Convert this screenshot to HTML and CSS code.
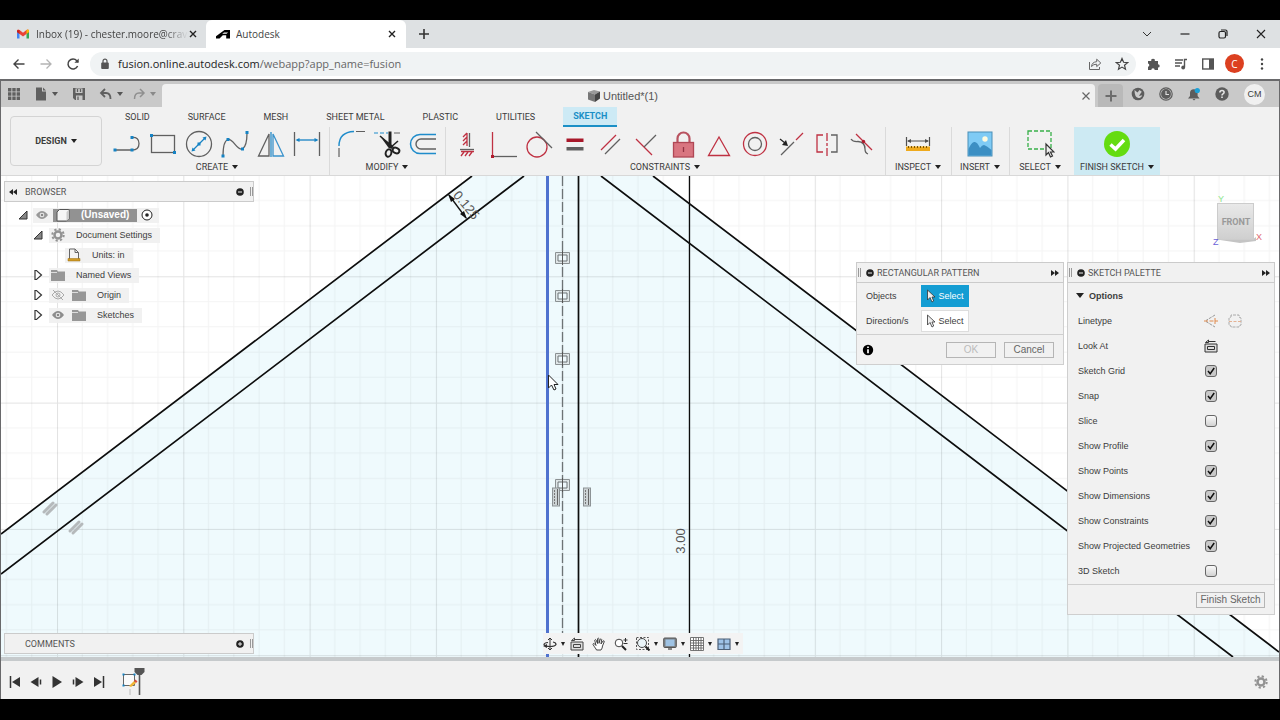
FILE: index.html
```html
<!DOCTYPE html>
<html lang="en">
<head>
<meta charset="utf-8">
<title>Autodesk</title>
<link rel="stylesheet" href="styles.css">
</head>
<body>
<header class="chrome">
  <div class="tabstrip">
    <div class="btab">
      <svg class="fav" width="14" height="12" viewBox="0 0 14 12"><path d="M1 2.500v8h2.500V5" fill="#4285f4"/><path d="M13 2.500v8h-2.500V5" fill="#34a853"/><path d="M1 2.200Q2 .8 3.500 2L7 4.800 10.500 2Q12 .8 13 2.200V4L7 8.500 1 4z" fill="#ea4335"/><path d="M10.500 2Q12 .8 13 2.200V4l-2.500 1.900z" fill="#fbbc04"/><path d="M1 2.500v1.600l2.500 1.800V2z" fill="#c5221f"/></svg>
      <span class="btitle fade">Inbox (19) - chester.moore@crav</span>
      <button class="bx" aria-label="Close tab"><svg width="10" height="10" viewBox="0 0 10 10"><path d="M2 2l6 6M8 2L2 8" stroke="#222" stroke-width="1.400"/></svg></button>
    </div>
    <div class="btab active">
      <svg class="fav" width="14" height="12" viewBox="0 0 14 12"><path d="M0 10.500V8.200L8.500 2H14v8.500h-3.800V7.200H6.800L3.500 10.500zM6.200 5.800h4.300l1.600-1.300H8z" fill="#000" fill-rule="evenodd"/></svg>
      <span class="btitle">Autodesk</span>
      <button class="bx" aria-label="Close tab"><svg width="10" height="10" viewBox="0 0 10 10"><path d="M2 2l6 6M8 2L2 8" stroke="#222" stroke-width="1.400"/></svg></button>
    </div>
    <button class="newtab" aria-label="New tab"><svg width="12" height="12" viewBox="0 0 12 12"><path d="M6 1v10M1 6h10" stroke="#333" stroke-width="1.600"/></svg></button>
    <div class="winctl">
      <button aria-label="Search tabs"><svg width="12" height="12" viewBox="0 0 12 12"><path d="M2 4l4 4 4-4" fill="none" stroke="#333"/></svg></button>
      <button aria-label="Minimize"><svg width="12" height="12" viewBox="0 0 12 12"><path d="M1.500 6h9" stroke="#222" stroke-width="1.200"/></svg></button>
      <button aria-label="Restore"><svg width="12" height="12" viewBox="0 0 12 12"><rect x="2" y="3.500" width="6.500" height="6.500" rx="1.500" fill="none" stroke="#222" stroke-width="1.200"/><path d="M4 2h4.500q1.500 0 1.500 1.500V8" fill="none" stroke="#222" stroke-width="1.200"/></svg></button>
      <button aria-label="Close"><svg width="12" height="12" viewBox="0 0 12 12"><path d="M2 2l8 8M10 2l-8 8" stroke="#222" stroke-width="1.100"/></svg></button>
    </div>
  </div>
  <div class="navbar">
    <button aria-label="Back"><svg width="14" height="14" viewBox="0 0 14 14"><path d="M12.500 7H2M6.500 2.500L2 7l4.500 4.500" fill="none" stroke="#444" stroke-width="1.400"/></svg></button>
    <button aria-label="Forward"><svg width="14" height="14" viewBox="0 0 14 14"><path d="M1.500 7H12M7.500 2.500L12 7l-4.500 4.500" fill="none" stroke="#b4b4b4" stroke-width="1.300"/></svg></button>
    <button aria-label="Reload"><svg width="14" height="14" viewBox="0 0 14 14"><path d="M11.600 9A5 5 0 1 1 10.800 3.700L12 5" fill="none" stroke="#444" stroke-width="1.500"/><path d="M12.700 1.500v4.300H8.400z" fill="#444"/></svg></button>
    <div class="omni">
      <svg width="10" height="12" viewBox="0 0 10 12"><rect x="1.200" y="4.500" width="7.600" height="6.500" rx="1" fill="#555"/><path d="M3 5V3.200a2 2 0 0 1 4 0V5" fill="none" stroke="#555" stroke-width="1.200"/></svg>
      <div class="url"><span>fusion.online.autodesk.com</span>/webapp?app_name=fusion</div>
      <button aria-label="Share"><svg width="14" height="14" viewBox="0 0 14 14"><path d="M1.500 5v7.500h10V10" fill="none" stroke="#666"/><path d="M3.500 9.500Q4 5 8.700 4.700V2.200L12.800 6 8.700 9.600V7.200Q5.500 7 3.500 9.500z" fill="none" stroke="#666"/></svg></button>
      <button aria-label="Bookmark"><svg width="14" height="14" viewBox="0 0 14 14"><path d="M7 1.500l1.600 3.800 4 .3-3.100 2.600 1 4L7 10.100 3.500 12.200l1-4L1.400 5.600l4-.3z" fill="none" stroke="#444" stroke-width="1.200"/></svg></button>
    </div>
    <div class="exts">
      <button aria-label="Extensions"><svg width="14" height="14" viewBox="0 0 14 14"><path d="M1 4h3.300a1.800 1.800 0 1 1 3.500 0H11v3.200a1.700 1.700 0 1 1 0 3.400V13H7.700a1.700 1.700 0 0 0-3.400 0H1V9.800a1.700 1.700 0 0 0 0-3.300z" fill="#555"/></svg></button>
      <button aria-label="Media"><svg width="14" height="14" viewBox="0 0 14 14"><path d="M1 3h8M1 6h7M1 9h5M10.500 10V2.500H13" fill="none" stroke="#555" stroke-width="1.400"/><circle cx="9.200" cy="10.500" r="1.900" fill="#555"/></svg></button>
      <button aria-label="Side panel"><svg width="14" height="14" viewBox="0 0 14 14"><rect x="1.700" y="2" width="10.600" height="10" fill="none" stroke="#555" stroke-width="1.400"/><path d="M8 2h4.500v10H8z" fill="#555"/></svg></button>
      <button class="avatar" aria-label="Profile">C</button>
      <button aria-label="Menu"><svg width="14" height="14" viewBox="0 0 14 14" fill="#444"><circle cx="7" cy="2.500" r="1.200"/><circle cx="7" cy="7" r="1.200"/><circle cx="7" cy="11.500" r="1.200"/></svg></button>
    </div>
  </div>
</header>

<div class="app">
  <div class="appbar">
    <div class="quick">
      <button aria-label="Apps"><svg width="14" height="14" viewBox="0 0 14 14" fill="#606060"><path d="M1 1h3.400v3.400H1zM5.300 1h3.400v3.400H5.300zM9.600 1H13v3.400H9.600zM1 5.300h3.400v3.400H1zM5.300 5.300h3.400v3.400H5.300zM9.600 5.300H13v3.400H9.600zM1 9.600h3.400V13H1zM5.300 9.600h3.400V13H5.300zM9.600 9.600H13V13H9.600z"/></svg></button>
      <button class="drop" aria-label="File"><svg width="14" height="14" viewBox="0 0 14 14"><path d="M2 .5h6v4h4V13.500H2z" fill="#606060"/><path d="M9 .5l3 3H9z" fill="#606060"/></svg><i class="car"></i></button>
      <button aria-label="Save"><svg width="14" height="14" viewBox="0 0 14 14"><path d="M1 1h12v12H3L1 11z" fill="#606060"/><path d="M3.500 1.500h7v4.500h-7zM4 8.500h6.500V13H4z" fill="#c9c9c9"/><path d="M5.500 2v3M8.500 2v3M6 9.500V13" stroke="#606060" stroke-width="1.300"/></svg></button>
      <button class="drop" aria-label="Undo"><svg width="14" height="14" viewBox="0 0 14 14"><path d="M6 2L2 6l4 4M2.500 6H7q4.500 0 4.500 6" fill="none" stroke="#606060" stroke-width="1.800"/></svg><i class="car"></i></button>
      <button class="drop dim" aria-label="Redo"><svg width="14" height="14" viewBox="0 0 14 14"><path d="M8 2l4 4-4 4M11.500 6H7q-4.500 0-4.500 6" fill="none" stroke="#606060" stroke-width="1.500"/></svg><i class="car"></i></button>
    </div>
    <div class="doctab">
      <svg width="14" height="14" viewBox="0 0 14 14"><path d="M1 3l6-2 6 1.500-5 3z" fill="#999"/><path d="M1 3l7 2.500V13L1 10.500z" fill="#777"/><path d="M8 5.500l5-3v7L8 13z" fill="#444"/></svg>
      <span>Untitled*(1)</span>
      <button class="docx" aria-label="Close document"><svg width="10" height="10" viewBox="0 0 10 10"><path d="M1.500 1.500l7 7M8.500 1.500l-7 7" stroke="#666" stroke-width="1.200"/></svg></button>
    </div>
    <button class="plus" aria-label="New design"><svg width="12" height="12" viewBox="0 0 12 12"><path d="M6 .5v11M.5 6h11" stroke="#6c6c6c" stroke-width="2"/></svg></button>
    <div class="tray">
      <button aria-label="Extensions"><svg width="14" height="14" viewBox="0 0 14 14"><circle cx="7" cy="7" r="6.300" fill="#5c5c5c"/><path d="M3.500 3L6.500 5.500 8.500 3l2.300 1.800L9 7.200 8 9l3.200-.8q-.8 2.800-3.800 2.800Q3.500 10.500 3.500 3z" fill="#ccc"/></svg></button>
      <button aria-label="Job status"><svg width="14" height="14" viewBox="0 0 14 14"><circle cx="7" cy="7" r="6.200" fill="none" stroke="#5c5c5c" stroke-width="1.200"/><circle cx="7" cy="7" r="4.900" fill="#5c5c5c"/><path d="M7 4v3.500h3" fill="none" stroke="#ddd" stroke-width="1.200"/></svg></button>
      <button aria-label="Notifications"><svg width="14" height="14" viewBox="0 0 14 14"><path d="M1 11.500L3 9V6a3.800 3.800 0 0 1 7.600 0v3l2 2.500zM5.500 12h3L7 13.500z" fill="#5c5c5c"/><circle cx="10.300" cy="3.500" r="2.600" fill="#1ba0d7"/></svg></button>
      <button aria-label="Help"><svg width="14" height="14" viewBox="0 0 14 14"><circle cx="7" cy="7" r="6.700" fill="#5c5c5c"/><path d="M4.900 5.500q0-2 2.100-2t2.100 1.800q0 1-1.100 1.600Q7 7.500 7 8.500M7 9.500v1.500" fill="none" stroke="#e4e4e4" stroke-width="1.600"/></svg></button>
      <button class="cm">CM</button>
    </div>
  </div>

  <div class="ribbon">
    <button class="design">DESIGN<i class="car"></i></button>
    <div class="rmain">
      <nav class="rtabs">
        <button>SOLID</button><button>SURFACE</button><button>MESH</button><button>SHEET METAL</button><button>PLASTIC</button><button>UTILITIES</button><button class="on">SKETCH</button>
      </nav>
      <div class="groups">
        <section class="group">
          <div class="tools">
            <button aria-label="Line"><svg width="30" height="30" viewBox="0 0 30 30"><path d="M3 21h17q7 0 7-6.500T20 8.500" fill="none" stroke="#606060" stroke-width="1.300"/><path d="M1.500 19.500h3v3h-3zM18.500 19.500h3v3h-3zM18.500 7h3v3h-3z" fill="#1683c4"/></svg></button>
            <button aria-label="Rectangle"><svg width="30" height="30" viewBox="0 0 30 30"><rect x="3.500" y="6.500" width="23" height="17" fill="none" stroke="#606060" stroke-width="1.300"/><path d="M2 5h3v3H2zM25 22h3v3h-3z" fill="#1683c4"/></svg></button>
            <button aria-label="Circle"><svg width="30" height="30" viewBox="0 0 30 30"><circle cx="15" cy="15" r="12.500" fill="none" stroke="#606060" stroke-width="1.300"/><path d="M9 21L21 9" stroke="#1683c4" stroke-width="1.200"/><path d="M7.500 22.500l1-4 3 3zM22.500 7.500l-1 4-3-3zM13.500 13.500h3v3h-3z" fill="#1683c4"/></svg></button>
            <button aria-label="Spline"><svg width="30" height="30" viewBox="0 0 30 30"><path d="M3 27Q3 12 8 10.500C13 9 17 22 22.500 20Q27 17 27 4" fill="none" stroke="#606060" stroke-width="1.300"/><path d="M1.500 25.500h3v3h-3zM6.500 9h3v3h-3zM21 18.500h3v3h-3zM25.500 2h3v3h-3z" fill="#1683c4"/></svg></button>
            <button aria-label="Mirror"><svg width="30" height="30" viewBox="0 0 30 30"><path d="M13 5v22H2.500z" fill="none" stroke="#606060" stroke-width="1.300"/><path d="M17 5v22h10.500z" fill="none" stroke="#3a93cc" stroke-width="1.300"/><path d="M15 3v25" stroke="#1683c4" stroke-width="1.200"/></svg></button>
            <button aria-label="Dimension"><svg width="30" height="30" viewBox="0 0 30 30"><path d="M2.500 3v24M27.500 3v24" stroke="#606060" stroke-width="1.300"/><path d="M5 11h20" stroke="#1683c4" stroke-width="1.300"/><path d="M3.500 11l4-2v4zM26.500 11l-4-2v4z" fill="#1683c4"/></svg></button>
          </div>
          <button class="glabel">CREATE<i class="car"></i></button>
        </section>
        <section class="group">
          <div class="tools">
            <button aria-label="Fillet"><svg width="30" height="30" viewBox="0 0 30 30"><path d="M3 17Q3 3 18 2.500" fill="none" stroke="#1f8ccb" stroke-width="1.400"/><path d="M3 19v9M20 2.500h9" stroke="#606060" stroke-width="1.200"/></svg></button>
            <button aria-label="Trim"><svg width="30" height="30" viewBox="0 0 30 30"><path d="M2 4h14" stroke="#1f8ccb" stroke-dasharray="4 2"/><path d="M22 4h6" stroke="#606060"/><path d="M18 2.500V19" stroke="#222" stroke-width="3"/><path d="M8 7l8 11 4 2 1-3z" fill="#222"/><path d="M26 12l-8 7M8 7l14 12" stroke="#222" stroke-width="1.600"/><ellipse cx="16.500" cy="24" rx="2.800" ry="3.800" transform="rotate(20 16.500 24)" fill="none" stroke="#222" stroke-width="1.900"/><ellipse cx="24" cy="21.500" rx="3.500" ry="2.700" transform="rotate(25 24 21.500)" fill="none" stroke="#222" stroke-width="1.900"/></svg></button>
            <button aria-label="Offset"><svg width="30" height="30" viewBox="0 0 30 30"><path d="M28 5.500H12a9.500 9.500 0 0 0 0 19H28" fill="none" stroke="#1f8ccb" stroke-width="1.500"/><path d="M28 10H13a5 5 0 0 0 0 10H28" fill="none" stroke="#606060" stroke-width="1.400"/></svg></button>
          </div>
          <button class="glabel">MODIFY<i class="car"></i></button>
        </section>
        <section class="group">
          <div class="tools red">
            <button aria-label="Horizontal/Vertical"><svg width="30" height="30" viewBox="0 0 30 30"><path d="M17.500 4v14" stroke="#606060" stroke-width="1.300"/><path d="M15 4v13M11 8l4-4M11 12l4-4M11 16l4-4M9 27l3-4M13 27l3-4M17 27l3-4M9 22.500h13"/><path d="M8 20.500h14" stroke="#606060" stroke-width="1.300"/></svg></button>
            <button aria-label="Coincident"><svg width="30" height="30" viewBox="0 0 30 30"><path d="M4.500 3v24"/><path d="M6 27.500h23" stroke="#606060" stroke-width="1.300"/><path d="M3 26h3v3H3z" fill="#b01c2e" stroke="none"/></svg></button>
            <button aria-label="Tangent"><svg width="30" height="30" viewBox="0 0 30 30"><circle cx="13" cy="18" r="10"/><path d="M12 3l16 16" stroke="#606060"/></svg></button>
            <button aria-label="Equal"><svg width="30" height="30" viewBox="0 0 30 30"><path d="M6.500 9.500h17V13h-17z" fill="#a8182a" stroke="none"/><path d="M6.500 18h17v3.500h-17z" fill="#606060" stroke="none"/></svg></button>
            <button aria-label="Parallel"><svg width="30" height="30" viewBox="0 0 30 30"><path d="M5 21L20 6"/><path d="M9 25l15-15" stroke="#606060"/></svg></button>
            <button aria-label="Perpendicular"><svg width="30" height="30" viewBox="0 0 30 30"><path d="M4 10l16 16"/><path d="M12 18L24 6" stroke="#606060"/></svg></button>
            <button aria-label="Fix"><svg width="30" height="30" viewBox="0 0 30 30"><path d="M9.500 14V9.500a6 6 0 0 1 12 0V14" fill="none" stroke="#b95360" stroke-width="2.200"/><rect x="5.500" y="13.500" width="20" height="14.500" fill="#d97580" stroke="#b04755"/><path d="M15.500 18v5" stroke="#923442"/></svg></button>
            <button aria-label="Midpoint"><svg width="30" height="30" viewBox="0 0 30 30"><path d="M15 8l10.500 18.500H4.500z"/></svg></button>
            <button aria-label="Concentric"><svg width="30" height="30" viewBox="0 0 30 30"><circle cx="15" cy="15" r="11.500"/><circle cx="15" cy="15" r="6.500" stroke="#606060"/></svg></button>
            <button aria-label="Collinear"><svg width="30" height="30" viewBox="0 0 30 30"><path d="M5 26l13-13" stroke="#606060"/><path d="M20 11l7-7"/><path d="M4 10l5 4" stroke="#222"/><path d="M12 17l-6-1 4-5z" fill="#222" stroke="none"/></svg></button>
            <button aria-label="Symmetry"><svg width="30" height="30" viewBox="0 0 30 30"><path d="M11 6H5v17h6"/><path d="M19 6h6v17h-6" stroke="#606060"/><path d="M15 4v23" stroke-dasharray="8 2 3 2"/></svg></button>
            <button aria-label="Curvature"><svg width="30" height="30" viewBox="0 0 30 30"><path d="M3 10Q5 13 10 12.500 17 13 17 20q0 4 3 5" stroke="#606060"/><path d="M8 5l16 16"/><circle cx="15.500" cy="12.500" r="1.700" fill="#b01c2e" stroke="none"/></svg></button>
          </div>
          <button class="glabel">CONSTRAINTS<i class="car"></i></button>
        </section>
        <section class="group one">
          <div class="tools"><button aria-label="Measure"><svg width="30" height="30" viewBox="0 0 30 30"><path d="M3.500 8v9M26.500 8v9M5 12h20" stroke="#505050" stroke-width="1.200"/><path d="M4 12l4-2v4zM26 12l-4-2v4z" fill="#505050"/><path d="M3 17.500h24V22H3z" fill="#efaa1d"/><path d="M5.500 17v2M8.500 17v2M11.500 17v2M14.500 17v2M17.500 17v2M20.500 17v2M23.500 17v2" stroke="#7c5500"/></svg></button></div>
          <button class="glabel">INSPECT<i class="car"></i></button>
        </section>
        <section class="group one ins">
          <div class="tools"><button aria-label="Insert image"><svg width="30" height="30" viewBox="0 0 30 30"><rect x="3" y="3" width="24" height="24" fill="#7fcbf5" stroke="#4a8fb8"/><path d="M3.500 20Q6 14 9 13t6 6q2-3 4-3 3 1 7.500 5v5.500h-23z" fill="#3c8fc3"/><circle cx="20" cy="10" r="2.700" fill="#fffbe0"/></svg></button></div>
          <button class="glabel">INSERT<i class="car"></i></button>
        </section>
        <section class="group one sel">
          <div class="tools"><button aria-label="Select"><svg width="30" height="30" viewBox="0 0 30 30"><rect x="3" y="2" width="23" height="18" fill="none" stroke="#38b049" stroke-width="1.300" stroke-dasharray="4 2"/><path d="M21 15v11l2.500-2.500 2 4.500 2-1-2-4h3.500z" fill="#eee" stroke="#333" stroke-width="1.200"/></svg></button></div>
          <button class="glabel">SELECT<i class="car"></i></button>
        </section>
        <section class="group one fin">
          <div class="tools"><button aria-label="Finish sketch"><svg width="30" height="30" viewBox="0 0 30 30"><circle cx="15" cy="15" r="13" fill="#64dc10"/><path d="M8.500 15.500l5 4.500 8.500-9" fill="none" stroke="#fff" stroke-width="3.500"/></svg></button></div>
          <button class="glabel">FINISH SKETCH<i class="car"></i></button>
        </section>
      </div>
    </div>
  </div>

  <main class="work">
    <svg class="sketch" viewBox="1 176 1278 481" preserveAspectRatio="xMidYMid slice">
      <defs>
        <pattern id="grid" x="57" y="150" width="126.300" height="126.300" patternUnits="userSpaceOnUse">
          <path d="M25.260 0V126.300M50.520 0V126.300M75.780 0V126.300M101.040 0V126.300M0 25.260H126.300M0 50.520H126.300M0 75.780H126.300M0 101.040H126.300" stroke="#000" stroke-opacity=".045"/>
          <path d="M.5 0V126.300M0 .5H126.300" stroke="#000" stroke-opacity=".11"/>
        </pattern>
        <linearGradient id="cube" x1="0" y1="0" x2="0" y2="1"><stop offset="0" stop-color="#e9e9e9"/><stop offset="1" stop-color="#cfcfcf"/></linearGradient>
        <g id="sym" fill="none" stroke="#8b9193"><path d="M-7-5.500H7v11H-7z" fill="#dfe6e8"/><path d="M0-3h-4.500v6H0M0-3h4.500v6H0" fill="#eef8fc" stroke="#6f7577"/><path d="M0-7V7" stroke="#555"/></g>
        <g id="vert"><rect x="-4" y="-9" width="7" height="18" fill="#ccd3d5" stroke="#8d9396"/><path d="M1-8V8" stroke="#666"/><path d="M-2-7V8" stroke="#777" stroke-dasharray="2 1"/></g>
        <g id="par" stroke="#b5b9bb" stroke-width="3" stroke-linecap="round"><path d="M-6 4L3-5M-3 6L6-3"/></g>
      </defs>
      <path d="M1 176h1278v481H1z" fill="#fff"/>
      <path d="M1 534L472 176H653L1279 652v5H1z" fill="#effafd"/>
      <path d="M1 176h1278v481H1z" fill="url(#grid)"/>
      <g fill="none" stroke="#0d0d0d" stroke-width="1.700">
        <path d="M1 534L472 176M1 574L524 176M601 176L1233 657M653 176L1279 652"/>
        <path d="M578.500 176V657"/>
        <path d="M689.500 176V657" stroke-width="1.300"/>
      </g>
      <path d="M547.500 176V657" stroke="#4f72cf" stroke-width="3"/>
      <path d="M562.500 176V657" stroke="#6d7375" stroke-width="1.300" stroke-dasharray="10 3"/>
      <use href="#sym" x="562.500" y="258"/><use href="#sym" x="562.500" y="296"/><use href="#sym" x="562.500" y="359"/><use href="#sym" x="562.500" y="485"/>
      <use href="#vert" x="556.500" y="497"/><use href="#vert" x="587.500" y="497"/>
      <use href="#par" x="50" y="508"/><use href="#par" x="76" y="527"/>
      <path d="M449 195l17 23" stroke="#111" stroke-width="1.300"/><path d="M448 194l7 5-4 3zM467 219l-7-5 4-3z" fill="#111"/>
      <text class="dim-text" text-anchor="middle" transform="translate(463 208) rotate(50)">0.125</text>
      <text class="dim-text" text-anchor="middle" transform="translate(685 541) rotate(-90)">3.00</text>
      <path d="M548.500 375v13l3-3 2.500 5 2-1-2-4.500h4z" fill="#fff" stroke="#222"/>
      <path d="M1220 240h32l4-3v4l-16 2z" fill="#c4c4c4"/>
      <rect x="1217.500" y="203.500" width="36" height="36" fill="url(#cube)" stroke="#ccc"/>
      <text class="cube-text" x="1236" y="225" text-anchor="middle">FRONT</text>
      <text class="axis" x="1218" y="202" fill="#8de68d">Y</text><text class="axis" x="1213" y="245" fill="#6a5fd8">Z</text><text class="axis" x="1256" y="240" fill="#e06a72">X</text>
    </svg>

    <aside class="left">
      <div class="phead"><button class="ico" aria-label="Collapse"><svg width="10" height="8" viewBox="0 0 10 8"><path d="M5 1v6L1 4zM9 1v6L5 4z" fill="#222"/></svg></button><span>BROWSER</span><button class="ico end" aria-label="Minimize"><svg width="8" height="8" viewBox="0 0 8 8"><circle cx="4" cy="4" r="3.800" fill="#222"/><path d="M2 4h4" stroke="#eee"/></svg></button><i class="grip"></i></div>
      <ul class="tree">
        <li class="l0"><svg class="tri" width="10" height="10" viewBox="0 0 10 10"><path d="M9 1v8H1z" fill="#888" stroke="#333"/></svg><div class="node"><svg class="eye" width="14" height="10" viewBox="0 0 14 10"><path d="M1 5q6-8 12 0-6 8-12 0z" fill="#999"/><circle cx="7" cy="5" r="2.300" fill="#eee"/><circle cx="7" cy="5" r="1.300" fill="#888"/></svg><span class="root"><svg width="14" height="14" viewBox="0 0 14 14"><path d="M1 4l2.500-2.500H13v9L10.500 13H1z" fill="#f6f6f6" stroke="#555"/><path d="M10.500 13V4L13 1.500v9z" fill="#ccc"/></svg><b>(Unsaved)</b></span><svg width="12" height="12" viewBox="0 0 12 12"><circle cx="6" cy="6" r="5" fill="#fff" stroke="#222"/><circle cx="6" cy="6" r="1.800" fill="#222"/></svg></div></li>
        <li class="l1"><svg class="tri" width="10" height="10" viewBox="0 0 10 10"><path d="M9 1v8H1z" fill="#888" stroke="#333"/></svg><div class="node"><svg width="14" height="14" viewBox="0 0 14 14"><circle cx="7" cy="7" r="3.500" fill="none" stroke="#929292" stroke-width="2.500"/><circle cx="7" cy="7" r="5.700" fill="none" stroke="#929292" stroke-width="2" stroke-dasharray="2.200 2.276"/></svg><span>Document Settings</span></div></li>
        <li class="l2"><div class="node"><svg width="14" height="14" viewBox="0 0 14 14"><path d="M2.500 11V1H8l3.500 3.500V11M8 1v3.500h3.500" fill="#f4f4f4" stroke="#666"/><path d="M1 10.500h12V13H1z" fill="#d19a25" stroke="#9a6e13" stroke-width=".5"/></svg><span>Units: in</span></div></li>
        <li class="l1"><svg class="tri" width="10" height="12" viewBox="0 0 10 12"><path d="M2 1.500h1.500L8.500 6l-5 4.500H2z" fill="#fff" stroke="#333" stroke-width="1.200"/></svg><div class="node"><svg width="14" height="12" viewBox="0 0 14 12"><path d="M0 1h6l1 1.500h7V12H0z" fill="#979797"/><path d="M0 3.500h6" stroke="#ddd"/></svg><span>Named Views</span></div></li>
        <li class="l1"><svg class="tri" width="10" height="12" viewBox="0 0 10 12"><path d="M2 1.500h1.500L8.500 6l-5 4.500H2z" fill="#fff" stroke="#333" stroke-width="1.200"/></svg><div class="node"><svg width="14" height="10" viewBox="0 0 14 10"><path d="M1 5q6-8 12 0-6 8-12 0z" fill="none" stroke="#aaa"/><circle cx="7" cy="5" r="2" fill="none" stroke="#aaa"/><path d="M2 0l10 10" stroke="#aaa"/></svg><svg width="14" height="12" viewBox="0 0 14 12"><path d="M0 1h6l1 1.500h7V12H0z" fill="#979797"/><path d="M0 3.500h6" stroke="#ddd"/></svg><span>Origin</span></div></li>
        <li class="l1"><svg class="tri" width="10" height="12" viewBox="0 0 10 12"><path d="M2 1.500h1.500L8.500 6l-5 4.500H2z" fill="#fff" stroke="#333" stroke-width="1.200"/></svg><div class="node"><svg width="14" height="10" viewBox="0 0 14 10"><path d="M1 5q6-8 12 0-6 8-12 0z" fill="#8d8d8d"/><circle cx="7" cy="5" r="2.300" fill="#eee"/><circle cx="7" cy="5" r="1.300" fill="#888"/></svg><svg width="14" height="12" viewBox="0 0 14 12"><path d="M0 1h6l1 1.500h7V12H0z" fill="#979797"/><path d="M0 3.500h6" stroke="#ddd"/></svg><span>Sketches</span></div></li>
      </ul>
      <div class="phead comments"><span>COMMENTS</span><button class="ico end" aria-label="Expand"><svg width="8" height="8" viewBox="0 0 8 8"><circle cx="4" cy="4" r="3.800" fill="#222"/><path d="M2 4h4M4 2v4" stroke="#eee"/></svg></button><i class="grip"></i></div>
    </aside>

    <div class="right">
      <form class="panel">
        <div class="phead"><i class="grip"></i><button type="button" class="ico" aria-label="Minimize"><svg width="8" height="8" viewBox="0 0 8 8"><circle cx="4" cy="4" r="3.800" fill="#222"/><path d="M2 4h4" stroke="#eee"/></svg></button><span>RECTANGULAR PATTERN</span><button type="button" class="ico end" aria-label="Expand"><svg width="10" height="8" viewBox="0 0 10 8"><path d="M1 1v6l4-3zM5 1v6l4-3z" fill="#222"/></svg></button></div>
        <div class="pick"><label for="obj">Objects</label><button type="button" id="obj" class="blue"><svg width="10" height="14" viewBox="0 0 10 14"><path d="M1.500 1v10l2.500-2.500L6 13l1.700-1L6 8h3z" fill="#eee" stroke="#333" stroke-width=".8"/></svg>Select</button></div>
        <div class="pick"><label for="dir">Direction/s</label><button type="button" id="dir"><svg width="10" height="14" viewBox="0 0 10 14"><path d="M1.500 1v10l2.500-2.500L6 13l1.700-1L6 8h3z" fill="#eee" stroke="#333" stroke-width=".8"/></svg>Select</button></div>
        <div class="pfoot"><svg width="12" height="12" viewBox="0 0 12 12"><circle cx="6" cy="6" r="5.200" fill="#000"/><path d="M6 2.500v1.600M6 5.200v4" stroke="#fff" stroke-width="1.700"/></svg><button type="button" class="btn ok" disabled>OK</button><button type="button" class="btn">Cancel</button></div>
      </form>
      <form class="panel palette">
        <div class="phead"><i class="grip"></i><button type="button" class="ico" aria-label="Minimize"><svg width="8" height="8" viewBox="0 0 8 8"><circle cx="4" cy="4" r="3.800" fill="#222"/><path d="M2 4h4" stroke="#eee"/></svg></button><span>SKETCH PALETTE</span><button type="button" class="ico end" aria-label="Expand"><svg width="10" height="8" viewBox="0 0 10 8"><path d="M1 1v6l4-3zM5 1v6l4-3z" fill="#222"/></svg></button></div>
        <button type="button" class="opt"><i class="car"></i><b>Options</b></button>
        <div class="row"><span>Linetype</span><div class="rc"><button type="button" aria-label="Construction"><svg width="14" height="14" viewBox="0 0 14 14"><path d="M11 1L2 6.500M2 7.500l9 5.500" stroke="#999" stroke-dasharray="3 1"/><path d="M0 7h14" stroke="#e08a4c" stroke-dasharray="4 1.500"/><path d="M11 4v6" stroke="#e08a4c"/></svg></button><button type="button" aria-label="Centerline"><svg width="14" height="14" viewBox="0 0 14 14"><path d="M3 3V1h8v2l2 1v7l-2 1v1H3v-1l-2-1V4z" fill="none" stroke="#aaa" stroke-dasharray="3 1"/><path d="M1 7.500h12" stroke="#e5b294" stroke-dasharray="3 1.500"/></svg></button></div></div>
        <div class="row"><span>Look At</span><div class="rc"><button type="button" aria-label="Look At"><svg width="14" height="14" viewBox="0 0 14 14"><path d="M1 5h12v8H1zM3.500 7.500h7v3h-7z" fill="#ddd" stroke="#333"/><path d="M1.500 3.500l3-2.500v2.500zM4.500 2.500h7" fill="none" stroke="#333"/></svg></button></div></div>
        <div class="row"><label for="c1">Sketch Grid</label><div class="rc"><input type="checkbox" id="c1" checked></div></div>
        <div class="row"><label for="c2">Snap</label><div class="rc"><input type="checkbox" id="c2" checked></div></div>
        <div class="row"><label for="c3">Slice</label><div class="rc"><input type="checkbox" id="c3"></div></div>
        <div class="row"><label for="c4">Show Profile</label><div class="rc"><input type="checkbox" id="c4" checked></div></div>
        <div class="row"><label for="c5">Show Points</label><div class="rc"><input type="checkbox" id="c5" checked></div></div>
        <div class="row"><label for="c6">Show Dimensions</label><div class="rc"><input type="checkbox" id="c6" checked></div></div>
        <div class="row"><label for="c7">Show Constraints</label><div class="rc"><input type="checkbox" id="c7" checked></div></div>
        <div class="row"><label for="c8">Show Projected Geometries</label><div class="rc"><input type="checkbox" id="c8" checked></div></div>
        <div class="row"><label for="c9">3D Sketch</label><div class="rc"><input type="checkbox" id="c9"></div></div>
        <div class="pfoot"><button type="button" class="btn fs">Finish Sketch</button></div>
      </form>
    </div>

    <div class="viewbar">
      <button class="drop" aria-label="Orbit"><svg width="14" height="14" viewBox="0 0 14 14"><path d="M7 1v12M5 3l2-2 2 2M5 11l2 2 2-2" fill="none" stroke="#333"/><path d="M10 5q3 .5 3 2.500-1 2-6 2t-6-2q0-1.500 4-2" fill="none" stroke="#333" stroke-width="1.200"/><path d="M0 9l4 2V7z" fill="#333"/></svg><i class="car"></i></button>
      <button aria-label="Look at"><svg width="14" height="14" viewBox="0 0 14 14"><path d="M1 5h12v8H1zM3.500 7.500h7v3h-7z" fill="#ddd" stroke="#444"/><path d="M1.500 3.500l3-2.500v2.500zM4.500 2.500h7" fill="none" stroke="#444"/></svg></button>
      <button aria-label="Pan"><svg width="14" height="14" viewBox="0 0 14 14"><path d="M4 12Q2.500 10 1 7.500q0-1.500 1.500-.7L4 8.500 2.700 3.200q.7-1.400 1.500 0L5.500 6.500V1.700q.8-1.200 1.500 0v4.600l1.200-4q1-1 1.500.2L9 7l2-3q1.300-.7 1.300.6L10.500 9q0 2-1.500 4H4.500z" fill="#fff" stroke="#333" stroke-width=".9"/></svg></button>
      <button aria-label="Zoom"><svg width="14" height="14" viewBox="0 0 14 14"><circle cx="5" cy="6" r="3.800" fill="#fff" stroke="#444"/><path d="M8 9l4 4" stroke="#222" stroke-width="2"/><path d="M9.500 3h4M11.500 1v4M9.500 6.500h4" stroke="#333"/></svg></button>
      <button class="drop" aria-label="Zoom window"><svg width="14" height="14" viewBox="0 0 14 14"><rect x=".5" y=".5" width="12" height="12" fill="none" stroke="#555" stroke-dasharray="2 1.500"/><circle cx="6" cy="6" r="4.500" fill="#eaf4f8" stroke="#444"/><path d="M9.500 9.500l4 4" stroke="#222" stroke-width="2"/></svg><i class="car"></i></button>
      <button class="drop" aria-label="Display settings"><svg width="14" height="14" viewBox="0 0 14 14"><rect x=".7" y="1" width="12.600" height="9.500" rx="1" fill="#7d8388" stroke="#555"/><path d="M2.500 2.500h9v6.500h-9z" fill="#9fc3e4"/><path d="M5 11h4v2H5z" fill="#888"/></svg><i class="car"></i></button>
      <button class="drop" aria-label="Grid and snaps"><svg width="14" height="14" viewBox="0 0 14 14"><path d="M.5.500h13v13H.5zM3.500.500v13M6 .5v13M8.500.500v13M11 .5v13M.5 3.500h13M.5 6h13M.5 8.500h13M.5 11h13" fill="#fff" stroke="#666" stroke-width=".9"/></svg><i class="car"></i></button>
      <button class="drop" aria-label="Viewports"><svg width="14" height="14" viewBox="0 0 14 14"><path d="M1 2h12v10.500H1zM7 2v10.500M1 7h12" fill="#9fc3e8" stroke="#4d6077" stroke-width="1.200"/></svg><i class="car"></i></button>
    </div>
  </main>

  <footer class="timeline">
    <button aria-label="Start"><svg width="12" height="12" viewBox="0 0 12 12"><path d="M1.500 0v12" stroke="#333" stroke-width="1.500"/><path d="M11 1v10L3 6z" fill="#333"/></svg></button>
    <button aria-label="Step back"><svg width="12" height="12" viewBox="0 0 12 12"><path d="M8.500 1v10L.5 6z" fill="#333"/><path d="M10.500 3.500v5" stroke="#333" stroke-width="1.500"/></svg></button>
    <button aria-label="Play"><svg width="12" height="12" viewBox="0 0 12 12"><path d="M1.500 0v12L11 6z" fill="#333"/></svg></button>
    <button aria-label="Step forward"><svg width="12" height="12" viewBox="0 0 12 12"><path d="M3.500 1v10l8-5z" fill="#333"/><path d="M1.500 3.500v5" stroke="#333" stroke-width="1.500"/></svg></button>
    <button aria-label="End"><svg width="12" height="12" viewBox="0 0 12 12"><path d="M10.500 0v12" stroke="#333" stroke-width="1.500"/><path d="M1 1v10l8-5z" fill="#333"/></svg></button>
    <button class="feat" aria-label="Sketch feature"><svg width="24" height="28" viewBox="0 0 24 28"><path d="M2.500 7.500h11v11h-11z" fill="#fafafa" stroke="#666"/><path d="M1.500 6.500h2v2h-2zM12.500 6.500h2v2h-2zM1.500 17.500h2v2h-2z" fill="#1683c4"/><path d="M8 19l5-5 2 2-5 4z" fill="#f0b534"/><path d="M13 14l1.500-1.500 2 2L15 16z" fill="#dd4e38"/><path d="M9 22v6" stroke="#bbb"/><path d="M18.500 4v24" stroke="#555" stroke-width="1.600"/><path d="M13.500 1h10v4l-3 3h-4l-3-3z" fill="#555"/></svg></button>
    <button class="gear" aria-label="Settings"><svg width="14" height="14" viewBox="0 0 14 14"><circle cx="7" cy="7" r="3.500" fill="none" stroke="#929292" stroke-width="2.500"/><circle cx="7" cy="7" r="5.700" fill="none" stroke="#929292" stroke-width="2" stroke-dasharray="2.200 2.276"/></svg></button>
  </footer>
</div>
</body>
</html>
```
FILE: styles.css
```css
* { box-sizing: border-box; }
body {
  margin: 0;
  padding: 20px 0 21px;
  min-height: 100vh;
  display: flex;
  flex-direction: column;
  background: #000;
  color: #3c3c3c;
  font: 9px/12px "Liberation Sans", Arial, sans-serif;
}
button {
  border: 0;
  padding: 0;
  background: none;
  color: inherit;
  font: inherit;
  display: flex;
  align-items: center;
  justify-content: center;
  white-space: nowrap;
}
svg { display: block; flex: none; }
ul { margin: 0; padding: 0; list-style: none; }
.car {
  border: 3px solid transparent;
  border-top: 4px solid #222;
  border-bottom: 0;
  margin-left: 4px;
}

/* browser window */
.chrome { font-family: "Open Sans", "Noto Sans", sans-serif; }
.tabstrip { display: flex; height: 28px; background: #dee1e3; }
.btab {
  display: flex;
  align-items: center;
  width: 206px;
  padding: 0 8px 0 16px;
  font-size: 10px;
  color: #444;
}
.btab.active { width: 200px; padding: 0 9px 0 10px; background: #fff; border-radius: 6px 6px 0 0; }
.fav { margin-right: 6px; }
.btitle { flex: 1; overflow: hidden; white-space: nowrap; }
.fade { -webkit-mask-image: linear-gradient(90deg, #000 85%, transparent); mask-image: linear-gradient(90deg, #000 85%, transparent); }
.newtab { width: 36px; }
.winctl { margin-left: auto; display: flex; }
.winctl button { width: 38px; }
.navbar { display: flex; align-items: center; height: 31px; padding-right: 5px; background: #fff; }
.navbar > button { width: 27px; }
.navbar > button:first-child { margin-left: 5px; }
.omni {
  flex: 1;
  display: flex;
  align-items: center;
  height: 24px;
  margin-left: 4px;
  padding: 0 1px 0 10px;
  border-radius: 12px;
  background: #f0f3f4;
}
.omni button { width: 27px; }
.url { flex: 1; margin-left: 8px; font-size: 11px; line-height: 20px; color: #666; }
.url span { color: #222; }
.exts { display: flex; align-items: center; margin-left: 4px; }
.exts button { width: 27px; }
.exts .avatar { width: 19px; height: 19px; margin: 0 4px; border-radius: 50%; background: #dc4020; color: #fff; font-size: 10px; }

/* application frame */
.app {
  flex: 1;
  display: flex;
  flex-direction: column;
  border: 1px solid #69696b;
  border-width: 2px 1px 0;
  background: #f1f1f1;
}
.appbar { display: flex; height: 26px; background: #c9c9c9; }
.quick { display: flex; align-items: center; width: 161px; padding-left: 6px; }
.quick button { width: 14px; margin-right: 13px; }
.quick .drop { width: 24px; margin-right: 14px; }
.quick .drop:nth-child(4) { margin-right: 9px; }
.quick .drop:last-child { margin-right: 0; }
.quick .car { border-top-color: #555; }
.quick .dim { opacity: .55; }
.doctab {
  flex: 1;
  display: flex;
  align-items: center;
  justify-content: center;
  gap: 2px;
  margin-top: 3px;
  padding-right: 12px;
  background: #f1f1f1;
  border-radius: 4px 4px 0 0;
  font-size: 11px;
  color: #555;
  position: relative;
}
.docx { position: absolute; right: 4px; }
.plus { width: 25px; margin: 3px 0 0 3px; background: #b9b9b9; border-radius: 4px 4px 0 0; }
.tray { display: flex; align-items: center; padding: 0 14px 0 1px; }
.tray button { width: 28px; }
.tray .cm { width: 21px; height: 21px; margin-left: 8px; border-radius: 50%; background: #f0f0f0; }

/* ribbon */
.ribbon { display: flex; height: 69px; border-bottom: 1px solid #d8d8d8; font: 9px/12px Roboto, "Liberation Sans", sans-serif; }
.design {
  width: 92px;
  margin: 9px 5px 9px 9px;
  border: 1px solid #d4d4d4;
  border-radius: 4px;
  font-weight: bold;
}
.rmain { flex: 1; }
.rtabs { display: flex; gap: 18px; height: 20px; padding-left: 8px; }
.rtabs button { padding: 0 10px; }
.rtabs .on { background: #cdeaf5; border-bottom: 2px solid #1b8fc6; color: #1b8fc6; font-weight: bold; }
.groups { display: flex; height: 48px; }
.group { padding: 0 4px 0 3px; border-right: 1px solid #dadada; display: flex; flex-direction: column; align-items: center; }
.group:first-child { padding-left: 2px; }
.tools { display: flex; }
.tools button { width: 36px; height: 34px; }
.red svg { fill: none; stroke: #bf3142; stroke-width: 1.300; }
.one { width: 66px; }
.ins { width: 58px; }
.sel { width: 61px; border-right: 0; }
.fin { width: 86px; margin-left: 3px; border-right: 0; padding: 0; background: #cdeaf3; }

/* drawing area */
.work { flex: 1; position: relative; display: flex; min-height: 440px; overflow: hidden; }
.sketch { position: absolute; width: 100%; height: 100%; }
.dim-text { font: 13px "Liberation Sans", sans-serif; fill: #555; }
.cube-text { font: bold 9px Roboto, "Liberation Sans", sans-serif; fill: #999; }
.axis { font: 9px "Liberation Sans", sans-serif; }
.left { position: relative; display: flex; flex-direction: column; width: 250px; margin: 5px 0 3px 3px; }
.phead {
  display: flex;
  align-items: center;
  height: 21px;
  padding: 0 4px;
  background: #f1f1f1;
  border: 1px solid #cbcbcb;
  font: 9px/12px Roboto, "Liberation Sans", sans-serif;
  color: #555;
}
.left .phead { padding: 0 0 0 3px; }
.left .phead span { margin-left: 7px; }
.ico { width: 10px; }
.end { margin-left: auto; }
.grip { width: 3px; height: 9px; border: 1px solid #999; border-width: 0 1px; }
.left .grip { margin-left: 5px; }
.comments { margin-top: auto; }
.left .comments span { margin-left: 17px; }
.tree { padding-top: 3px; }
.tree li { display: flex; align-items: center; height: 20px; }
.tri { width: 12px; }
.l0 { padding-left: 13px; }
.l1 { padding-left: 28px; }
.l2 { padding-left: 57px; }
.node { display: flex; align-items: center; gap: 7px; height: 15px; margin-left: 4px; padding: 0 8px 0 2px; background: rgba(240, 240, 240, .9); }
.l1 .node { margin-left: 5px; }
.node span { margin-left: 4px; }
.node .root { display: flex; align-items: center; gap: 11px; margin: 0; padding: 0 8px 0 3px; height: 13px; background: #929292; color: #fff; font-size: 10px; }
.l0 .node { gap: 4px; padding-right: 6px; }
.right { position: relative; display: flex; align-items: flex-start; gap: 3px; margin: 86px 4px 2px auto; }
.panel { width: 208px; margin: 0; background: #f1f1f1; border: 1px solid #cfcfcf; border-top: 0; }
.panel .phead { margin: 0 -1px; padding: 0 3px 0 1px; }
.panel .phead span { margin-left: 2px; }
.panel .phead .ico:not(.end) { margin-left: 4px; }
.pick { display: flex; align-items: center; height: 25px; padding-left: 9px; }
.pick label { width: 55px; }
.pick button { width: 48px; height: 22px; gap: 2px; border: 1px solid #ddd; background: #fff; }
.pick .blue { background: #149dd3; border-color: #149dd3; color: #fff; }
.pfoot { display: flex; align-items: center; height: 30px; margin-top: 1px; padding: 0 9px 0 5px; gap: 8px; border-top: 1px solid #cfcfcf; }
.btn { width: 50px; height: 16px; border: 1px solid #b5b5b5; font-size: 10px; color: #666; }
.ok { margin-left: auto; color: #bbb; }
.fs { width: 69px; margin-left: auto; }
.opt { height: 25px; padding-left: 8px; }
.opt .car { border-width: 5px 4px 0; margin: 0 5px 0 0; }
.row { display: flex; align-items: center; justify-content: space-between; height: 25px; padding-left: 10px; }
.rc { display: flex; gap: 10px; width: 70px; }
input[type="checkbox"] {
  appearance: none;
  width: 12px;
  height: 12px;
  margin: 0 0 0 1px;
  border: 1px solid #666;
  border-radius: 3px;
  background: linear-gradient(#fafafa, #d2d2d2);
}
input[type="checkbox"]:checked {
  background: #c9c9c9 url("data:image/svg+xml,%3Csvg xmlns='http://www.w3.org/2000/svg' viewBox='0 0 10 10'%3E%3Cpath d='M2 5l2.200 2.800L8.200 2' fill='none' stroke='%23111' stroke-width='1.500'/%3E%3C/svg%3E") center / 10px 10px no-repeat;
}
.viewbar { position: absolute; left: 542px; bottom: 3px; display: flex; align-items: center; height: 21px; gap: 8px; padding-right: 7px; background: #f3f3f3; }
.viewbar .car { margin-left: 4px; border-width: 4px 2px 0; }
.viewbar .drop { width: 22px; margin-right: -3px; }

/* timeline */
.timeline { display: flex; align-items: center; height: 42px; padding: 4px 11px 0 8px; gap: 9px; border-top: 4px solid #c6cacc; }
.feat { margin: -2px 0 0 7px; }
.gear { margin-left: auto; }
```
